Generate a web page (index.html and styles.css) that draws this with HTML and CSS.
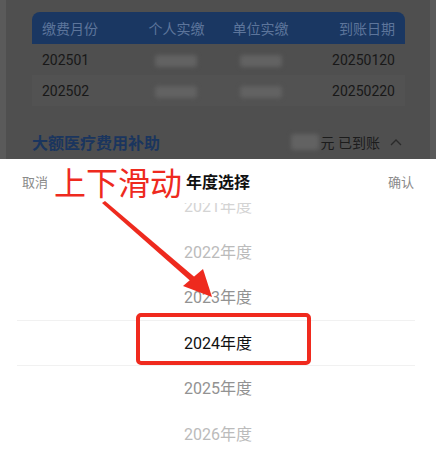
FILE: index.html
```html
<!DOCTYPE html>
<html lang="zh-CN">
<head>
  <meta charset="UTF-8">
  <title>年度选择</title>
  <meta name="viewport" content="width=device-width, initial-scale=1">
  <link rel="stylesheet" href="styles.css">
</head>
<body>

  <!-- dimmed page behind the sheet -->
  <div class="backdrop">
    <div class="card">
      <div class="pay-table">
        <div class="row head">
          <span>缴费月份</span><span>个人实缴</span><span>单位实缴</span><span>到账日期</span>
        </div>
        <div class="row">
          <span>202501</span><span><i class="blur"></i></span><span><i class="blur"></i></span><span>20250120</span>
        </div>
        <div class="row alt">
          <span>202502</span><span><i class="blur"></i></span><span><i class="blur"></i></span><span>20250220</span>
        </div>
      </div>
      <div class="subsidy">
        <b>大额医疗费用补助</b>
        <div class="subsidy-right">
          <i class="blur small"></i>
          <span>元 已到账</span>
          <svg width="12" height="8" viewBox="0 0 12 8"><path d="M1 7 L6 2 L11 7" fill="none" stroke="#2a2a2a" stroke-width="1.3"/></svg>
        </div>
      </div>
    </div>
  </div>

  <!-- bottom sheet -->
  <div class="sheet">
    <div class="sheet-head">
      <span class="cancel">取消</span>
      <span class="title">年度选择</span>
      <span class="confirm">确认</span>
    </div>
    <div class="picker">
      <div class="picker-list">
        <div class="item faint">2021年度</div>
        <div class="item far">2022年度</div>
        <div class="item near">2023年度</div>
        <div class="item active">2024年度</div>
        <div class="item near">2025年度</div>
        <div class="item far">2026年度</div>
      </div>
      <div class="picker-mask"></div>
    </div>
  </div>

  <!-- annotation drawn on top of the screenshot -->
  <div class="note">上下滑动</div>
  <div class="note-box"></div>
  <svg class="note-arrow" width="436" height="456" viewBox="0 0 436 456">
    <polygon points="102,203 105,201 198,280 195,285" fill="#ee2a1e"/>
    <polygon points="212,297 183,286 203,269" fill="#ee2a1e"/>
  </svg>

</body>
</html>
```

FILE: styles.css
```css
* {
  margin: 0;
  padding: 0;
  box-sizing: border-box;
}

html, body {
  width: 436px;
  height: 456px;
  overflow: hidden;
  font-family: "Roboto", "Noto Sans CJK SC", sans-serif;
  background: #fff;
  position: relative;
}

.backdrop {
  height: 159px;
  background: #5a5a5a;
  padding: 0 6px;
}

.card {
  height: 100%;
  background: #4f4f4f;
  padding: 12px 25px 0 26px;
}

.pay-table {
  font-size: 14px;
  color: #181818;
}

.row {
  display: grid;
  grid-template-columns: 1.1fr 1fr 1fr 1.1fr;
  align-items: center;
  height: 31px;
  padding: 0 10px;
}

.row span:nth-child(2), .row span:nth-child(3) {
  text-align: center;
}

.row span:last-child {
  text-align: right;
}

.row.head {
  height: 32px;
  background: #1a3762;
  color: #5d759b;
  border-radius: 8px 8px 0 0;
}

.row.alt {
  background: #525252;
}

.blur {
  display: inline-block;
  width: 42px;
  height: 12px;
  background: #626262;
  border-radius: 3px;
  filter: blur(2px);
  vertical-align: middle;
}

.blur.small {
  width: 28px;
  height: 16px;
}

.subsidy {
  display: flex;
  justify-content: space-between;
  align-items: center;
  margin-top: 24px;
}

.subsidy b {
  font-size: 16px;
  color: #1a355e;
}

.subsidy-right {
  display: flex;
  align-items: center;
  gap: 2px;
  font-size: 14px;
  color: #1c1c1c;
  padding-right: 3px;
}

.subsidy-right svg {
  margin-left: 8px;
}

.sheet {
  height: 297px;
  background: #fff;
  display: flex;
  flex-direction: column;
}

.sheet-head {
  height: 44px;
  display: flex;
  align-items: center;
  justify-content: space-between;
  padding: 0 22px;
  position: relative;
}

.cancel, .confirm {
  font-size: 13px;
  color: #8a8a8a;
}

.title {
  position: absolute;
  left: 0;
  right: 0;
  text-align: center;
  font-size: 16px;
  font-weight: bold;
  color: #111;
  pointer-events: none;
}

.picker {
  flex: 1;
  overflow: hidden;
  position: relative;
}

.picker-list {
  margin-top: -19px;
}

.item {
  height: 45.5px;
  line-height: 45.5px;
  text-align: center;
  font-size: 16px;
}

.item.faint { color: #d4d4d4; }
.item.far { color: #bbbbbb; }
.item.near { color: #929292; }
.item.active { color: #111; }

.picker-mask {
  position: absolute;
  left: 17px;
  right: 21px;
  top: 117px;
  height: 46px;
  border-top: 1px solid #f1f1f1;
  border-bottom: 1px solid #f1f1f1;
}

.note {
  position: absolute;
  left: 54px;
  top: 161px;
  font-size: 32px;
  line-height: 40px;
  color: #ee2a1e;
  font-family: "Noto Sans CJK SC", sans-serif;
}

.note-box {
  position: absolute;
  left: 136px;
  top: 313px;
  width: 175px;
  height: 52px;
  border: 4px solid #f02a1e;
  border-radius: 5px;
}

.note-arrow {
  position: absolute;
  left: 0;
  top: 0;
}
```
